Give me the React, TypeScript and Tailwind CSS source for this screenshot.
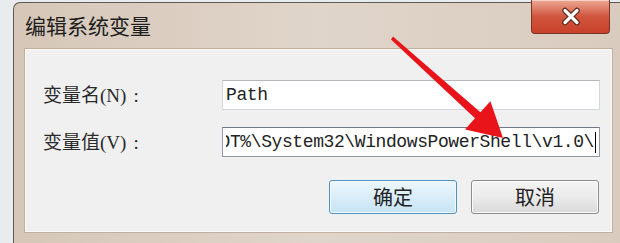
import React from "react";

// 编辑系统变量 — Win7 风格对话框截图
const cjk = { fontFamily: '"Noto Sans CJK SC", "Liberation Sans", sans-serif' };
const label = { fontFamily: '"Liberation Serif", "Noto Sans CJK SC", serif' };
const mono = { fontFamily: '"Liberation Mono", "Noto Sans CJK SC", monospace' };

function CloseButton() {
  return (
    <div className="-mt-[3px] mr-[3px] flex h-[34px] w-[79px] items-center justify-center rounded-b-[4px] border border-t-0 border-[#7a3426] bg-gradient-to-b from-[#eba795] via-[#d0553d] to-[#c8412b] shadow-[inset_0_1px_0_#f6cfc4]">
      <svg width="22" height="19" viewBox="0 0 22 19">
        <path d="M5 3.5 L17 15.5 M17 3.5 L5 15.5" stroke="#5a2318" strokeWidth="5.5" strokeLinecap="round" />
        <path d="M5 3.5 L17 15.5 M17 3.5 L5 15.5" stroke="#ffffff" strokeWidth="3.2" strokeLinecap="round" />
      </svg>
    </div>
  );
}

function Field({ name, children, strong }: { name: string; children: React.ReactNode; strong?: boolean }) {
  return (
    <div className="flex items-center">
      <span className="flex items-center text-[19px] leading-none text-[#2a2a2a]" style={label}>
        {name}
        <span className="ml-[7px]">:</span>
      </span>
      <div
        className={
          "ml-auto flex h-[30px] w-[378px] items-center overflow-hidden bg-white px-[3px] " +
          (strong ? "border border-[#8f9aa4] border-t-[#6f7a84]" : "border border-[#d3d7db] border-t-[#b3b7bc]")
        }
      >
        {children}
      </div>
    </div>
  );
}

function Button({ text, primary }: { text: string; primary?: boolean }) {
  return (
    <div
      className={
        "flex h-[34px] w-[128px] items-center justify-center rounded-[3px] border text-[20px] text-[#222] " +
        (primary
          ? "border-[#4f93c2] bg-gradient-to-b from-[#edf7fd] to-[#c7e3f5] shadow-[inset_0_0_0_1px_#f4fbff]"
          : "border-[#8c8c8c] bg-gradient-to-b from-[#f4f4f4] via-[#ebebeb] to-[#d9d9d9] shadow-[inset_0_0_0_1px_#fbfbfb]")
      }
      style={cjk}
    >
      {text}
    </div>
  );
}

export default function App() {
  return (
    <div className="relative flex h-[243px] w-[620px] overflow-hidden bg-[#e9ecee] pl-[13px] pt-[2px]">
      <div className="flex flex-1 flex-col rounded-tl-[7px] border-l border-t border-[#5e5954] bg-gradient-to-r from-[#d6c7b8] via-[#e0d5ca] to-[#d9ccbf] pb-[10px] pl-[10px] pr-[7px]">
        <div className="flex h-[45px] items-start justify-between">
          <span className="pl-[1px] pt-[9px] text-[21px] leading-[26px] text-[#1e1e1e]" style={cjk}>
            编辑系统变量
          </span>
          <CloseButton />
        </div>
        <div className="flex flex-1 flex-col border border-[#bfb0a1] bg-[#f0f0f0] pl-[18px] pr-[12px] pt-[31px] shadow-[inset_0_0_0_1px_#fbf8f5]">
          <div className="flex flex-col gap-[17px]">
            <Field name="变量名(N)">
              <span className="text-[18px] tracking-[-0.4px] text-[#222]" style={mono}>
                Path
              </span>
            </Field>
            <Field name="变量值(V)" strong>
              <div className="flex w-full justify-end overflow-hidden">
                <span className="whitespace-nowrap text-[18px] tracking-[-0.4px] text-[#222]" style={mono}>
                  %SYSTEMROOT%\System32\WindowsPowerShell\v1.0\
                </span>
                <span className="ml-[1px] h-[21px] w-[1px] shrink-0 self-center bg-black" />
              </div>
            </Field>
          </div>
          <div className="mr-[1px] mt-[23px] flex justify-end gap-[14px]">
            <Button text="确定" primary />
            <Button text="取消" />
          </div>
        </div>
      </div>
      <svg className="pointer-events-none absolute left-0 top-0" width="620" height="243" viewBox="0 0 620 243">
        <polygon
          points="393,36.6 480.4,112.3 490.4,101.2 503,138 465,129.4 475,118.3 391,39.4"
          fill="#e8141a"
        />
      </svg>
    </div>
  );
}
